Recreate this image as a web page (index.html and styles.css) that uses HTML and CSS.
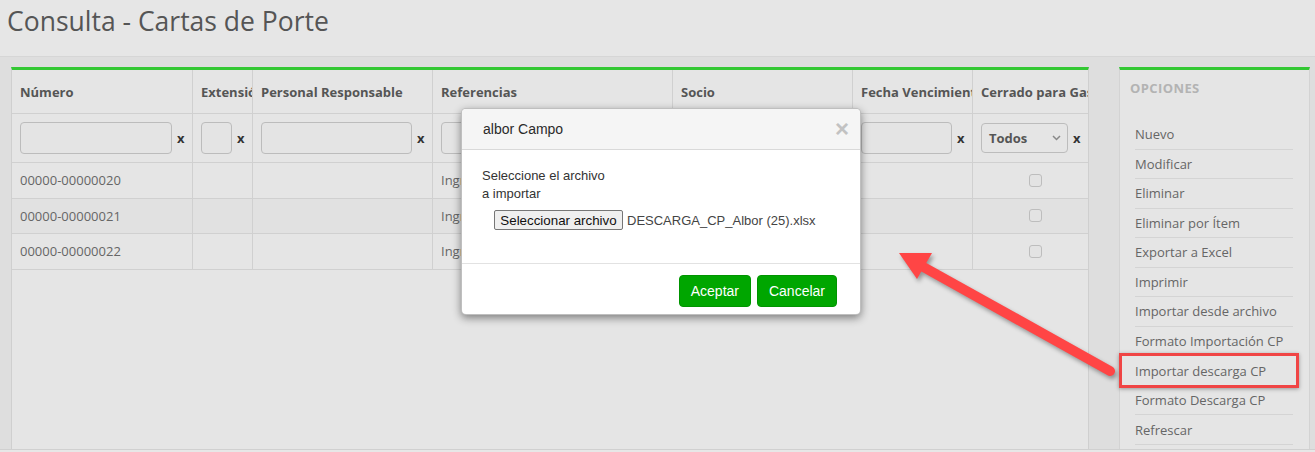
FILE: index.html
```html
<!DOCTYPE html>
<html lang="es">
<head>
<meta charset="utf-8">
<title>Consulta - Cartas de Porte</title>
<link rel="stylesheet" href="styles.css">
</head>
<body>
<header class="page-head"><h1>Consulta - Cartas de Porte</h1></header>
<main class="content">
  <section class="grid-panel">
    <div class="row head">
      <div class="cell">Número</div>
      <div class="cell">Extensión</div>
      <div class="cell">Personal Responsable</div>
      <div class="cell">Referencias</div>
      <div class="cell">Socio</div>
      <div class="cell">Fecha Vencimiento</div>
      <div class="cell">Cerrado para Gastos</div>
    </div>
    <div class="row filters">
      <div class="cell"><span class="inp"></span><b class="clr">x</b></div>
      <div class="cell"><span class="inp"></span><b class="clr">x</b></div>
      <div class="cell"><span class="inp"></span><b class="clr">x</b></div>
      <div class="cell"><span class="inp"></span><b class="clr">x</b></div>
      <div class="cell"><span class="inp"></span><b class="clr">x</b></div>
      <div class="cell"><span class="inp"></span><b class="clr">x</b></div>
      <div class="cell"><span class="sel">Todos<svg class="chev" width="9" height="6" viewBox="0 0 9 6"><path d="M1 1l3.5 3.5L8 1" fill="none" stroke="#888" stroke-width="1.5"/></svg></span><b class="clr">x</b></div>
    </div>
    <div class="row data">
      <div class="cell">00000-00000020</div><div class="cell"></div><div class="cell"></div>
      <div class="cell">Ingreso</div><div class="cell"></div><div class="cell"></div>
      <div class="cell center"><span class="chk"></span></div>
    </div>
    <div class="row data alt">
      <div class="cell">00000-00000021</div><div class="cell"></div><div class="cell"></div>
      <div class="cell">Ingreso</div><div class="cell"></div><div class="cell"></div>
      <div class="cell center"><span class="chk"></span></div>
    </div>
    <div class="row data">
      <div class="cell">00000-00000022</div><div class="cell"></div><div class="cell"></div>
      <div class="cell">Ingreso</div><div class="cell"></div><div class="cell"></div>
      <div class="cell center"><span class="chk"></span></div>
    </div>
  </section>
  <aside class="options">
    <h2>OPCIONES</h2>
    <ul>
      <li>Nuevo</li>
      <li>Modificar</li>
      <li>Eliminar</li>
      <li>Eliminar por Ítem</li>
      <li>Exportar a Excel</li>
      <li>Imprimir</li>
      <li>Importar desde archivo</li>
      <li>Formato Importación CP</li>
      <li>Importar descarga CP</li>
      <li>Formato Descarga CP</li>
      <li>Refrescar</li>
    </ul>
  </aside>
</main>

<div class="highlight"></div>
<svg class="arrow" width="1315" height="452" viewBox="0 0 1315 452">
  <g class="arrow-shape">
    <line x1="1110" y1="371" x2="918" y2="264" stroke="#ff4545" stroke-width="10" stroke-linecap="round"/>
    <polygon points="899,253 932,253 917,279" fill="#ff4545"/>
  </g>
</svg>

<div class="modal">
  <div class="modal-head"><span>albor Campo</span><b class="close">×</b></div>
  <div class="modal-body">
    <p class="msg">Seleccione el archivo a importar</p>
    <div class="file-row"><button class="file-btn">Seleccionar archivo</button><span class="file-name">DESCARGA_CP_Albor (25).xlsx</span></div>
  </div>
  <div class="modal-foot">
    <button class="btn">Aceptar</button>
    <button class="btn">Cancelar</button>
  </div>
</div>
</body>
</html>
```
FILE: styles.css
```css
html, body {
  margin: 0;
  padding: 0;
}
body {
  width: 1315px;
  height: 452px;
  overflow: hidden;
  position: relative;
  background: #e7e7e7;
  font-family: "Open Sans", "DejaVu Sans", sans-serif;
}
.page-head {
  height: 57px;
  box-sizing: border-box;
  background: #e6e6e6;
  border-bottom: 1px solid #d6d6d6;
  padding: 3px 7px 0;
}
.page-head h1 {
  margin: 0;
  font-size: 26.5px;
  line-height: 36px;
  font-weight: 400;
  color: #555;
}
.content {
  display: flex;
  gap: 30px;
  height: 393px;
  box-sizing: border-box;
  padding: 10px 0 0 11px;
  background: #dedede;
  border-bottom: 1px solid #d0d0d0;
}
.grid-panel {
  width: 1078px;
  box-sizing: border-box;
  background: #e5e5e5;
  border: 1px solid #cfcfcf;
  border-top: 3px solid #33c833;
  border-bottom: none;
  overflow: hidden;
}
.row {
  display: grid;
  grid-template-columns: 181px 60px 180px 240px 180px 120px 124px;
  width: 1085px;
}
.cell {
  box-sizing: border-box;
  border-right: 1px solid #d0d0d0;
  border-bottom: 1px solid #d0d0d0;
  padding: 0 7px 0 8px;
  display: flex;
  align-items: center;
  overflow: hidden;
  white-space: nowrap;
  font-size: 13px;
  color: #666;
}
.head .cell {
  height: 44px;
  font-weight: 700;
  color: #555;
  padding-right: 2px;
}
.filters .cell {
  height: 49px;
  gap: 5px;
}
.inp {
  flex: 1;
  min-width: 0;
  height: 32px;
  box-sizing: border-box;
  border: 1px solid #bcbcbc;
  border-radius: 4px;
  background: #e4e4e4;
}
.clr {
  font-size: 13px;
  font-weight: 700;
  color: #333;
  width: 8px;
  line-height: 1;
}
.sel {
  width: 87px;
  height: 30px;
  box-sizing: border-box;
  border: 1px solid #bcbcbc;
  border-radius: 4px;
  display: flex;
  align-items: center;
  justify-content: space-between;
  padding: 0 6px 0 7px;
  font-weight: 700;
  color: #555;
}
.data .cell {
  height: 35.5px;
}
.data.alt .cell {
  background: #e1e1e1;
}
.cell.center {
  justify-content: center;
  padding: 0 0 0 1px;
}
.chk {
  width: 13px;
  height: 13px;
  box-sizing: border-box;
  border: 1px solid #bdbdbd;
  border-radius: 3px;
  background: #e3e3e3;
}
.options {
  width: 191px;
  box-sizing: border-box;
  background: #e5e5e5;
  border: 1px solid #d3d3d3;
  border-top: 3px solid #33c833;
  border-bottom: none;
}
.options h2 {
  margin: 0;
  padding: 9px 10px 0;
  font-size: 13px;
  line-height: 18px;
  font-weight: 700;
  letter-spacing: 0.4px;
  color: #b3b3b3;
}
.options ul {
  list-style: none;
  margin: 23px 16px 0 15px;
  padding: 0;
}
.options li {
  font-size: 13px;
  line-height: 18px;
  padding: 5.28px 0;
  border-bottom: 1px solid #d4d4d4;
  color: #666;
}
.highlight {
  position: absolute;
  left: 1119px;
  top: 353px;
  width: 180px;
  height: 35px;
  box-sizing: border-box;
  border: 3px solid #f04545;
  box-shadow: 0 1px 4px rgba(0, 0, 0, 0.35);
}
.arrow {
  position: absolute;
  left: 0;
  top: 0;
  pointer-events: none;
}
.arrow-shape {
  filter: drop-shadow(2px 3px 2px rgba(0, 0, 0, 0.35));
}
.modal {
  position: absolute;
  left: 461px;
  top: 108px;
  width: 400px;
  box-sizing: border-box;
  background: #fff;
  border: 1px solid rgba(0, 0, 0, 0.25);
  border-radius: 5px;
  box-shadow: 0 3px 9px rgba(0, 0, 0, 0.45);
  font-family: "Liberation Sans", Arial, sans-serif;
  color: #333;
  overflow: hidden;
}
.modal-head {
  height: 41px;
  box-sizing: border-box;
  background: #f5f5f5;
  border-bottom: 1px solid #d9d9d9;
  display: flex;
  align-items: center;
  justify-content: space-between;
  padding: 0 11px 0 21px;
  font-size: 14px;
  color: #2a2a2a;
}
.close {
  font-size: 24px;
  font-weight: 700;
  color: #c2c2c2;
  line-height: 1;
}
.modal-body {
  height: 114px;
  box-sizing: border-box;
  padding: 17px 20px 0;
  border-bottom: 1px solid #e2e2e2;
}
.msg {
  margin: 0;
  width: 130px;
  font-size: 13px;
  line-height: 18px;
}
.file-row {
  display: flex;
  align-items: center;
  gap: 4px;
  margin: 7px 0 0 12px;
}
.file-btn {
  height: 20px;
  width: 129px;
  padding: 0;
  font-family: "Liberation Sans", Arial, sans-serif;
  font-size: 13.33px;
  color: #111;
  background: #efefef;
  border: 1px solid #767676;
  border-radius: 2px;
}
.file-name {
  font-size: 13px;
  color: #444;
}
.modal-foot {
  display: flex;
  justify-content: flex-end;
  gap: 6px;
  padding: 11px 23px 7px;
}
.btn {
  height: 32px;
  padding: 0 11px;
  font-family: "Liberation Sans", Arial, sans-serif;
  font-size: 14px;
  color: #fff;
  background: #00a600;
  border: 1px solid #009400;
  border-radius: 4px;
}
```
